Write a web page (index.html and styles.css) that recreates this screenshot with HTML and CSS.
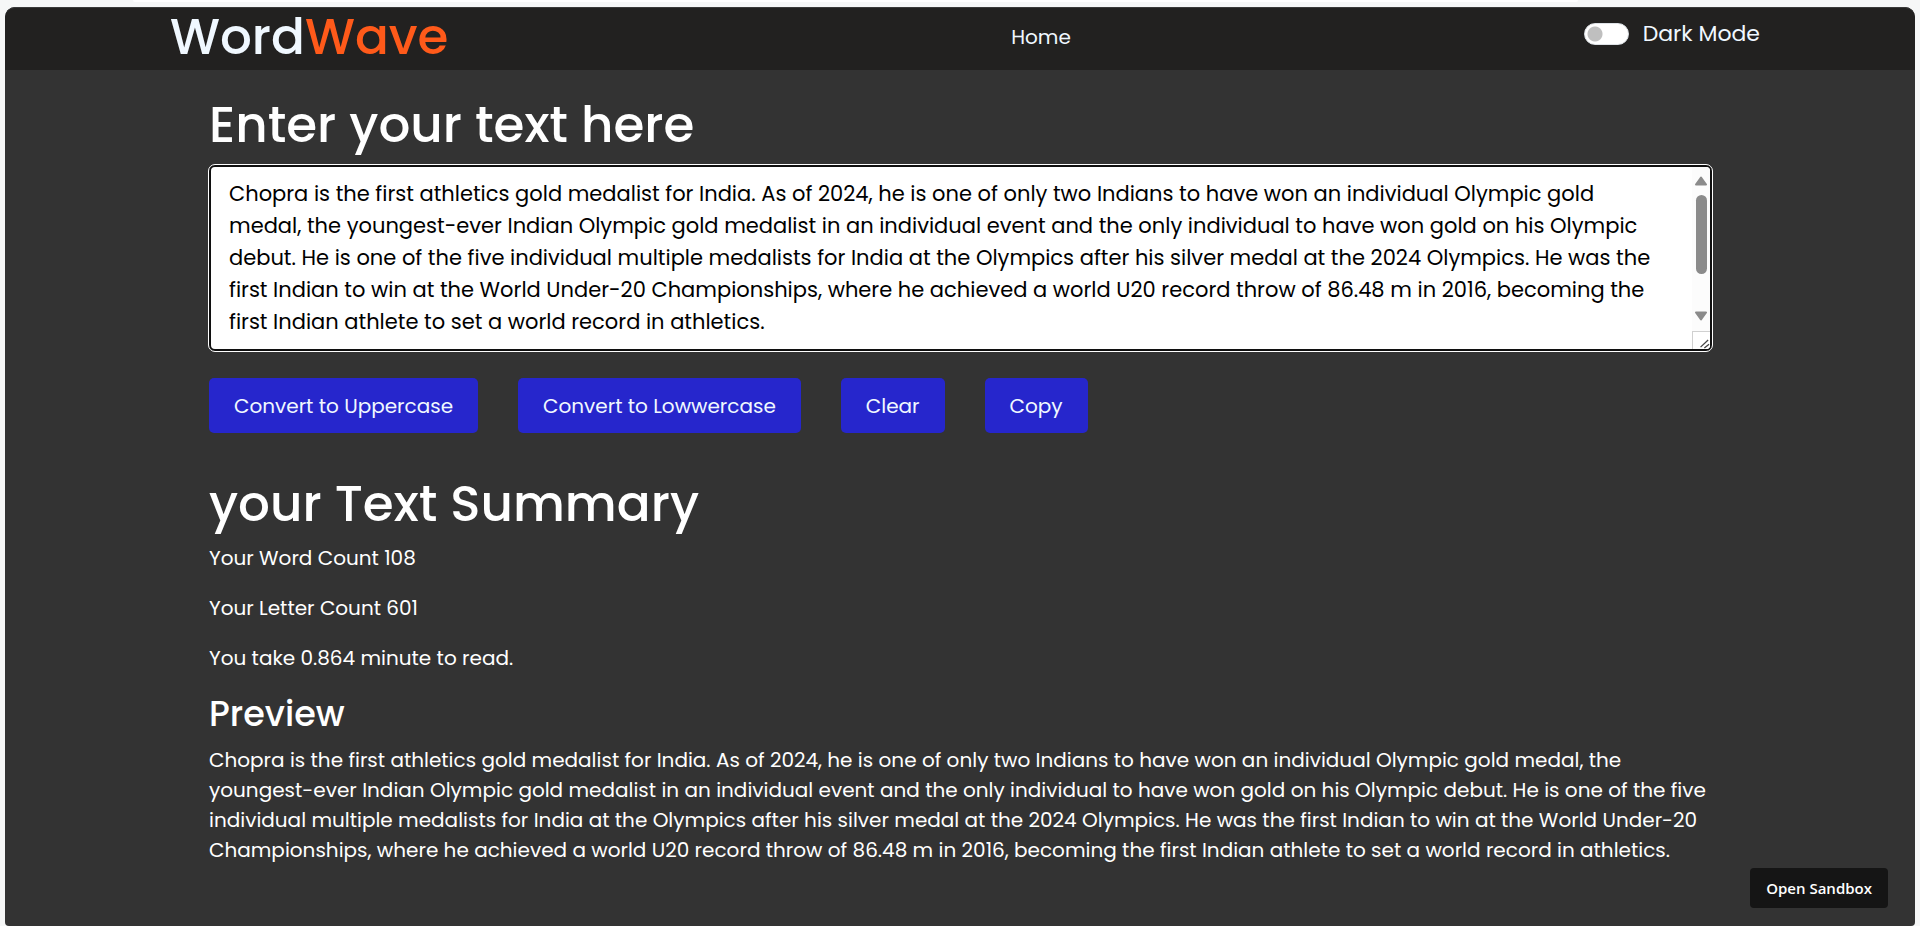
FILE: index.html
```html
<!DOCTYPE html>
<html lang="en">
<head>
<meta charset="utf-8">
<title>WordWave</title>
<link rel="stylesheet" href="styles.css">
</head>
<body>
<div class="tab-strip"></div>
<div class="panel">
  <header class="navbar">
    <a class="logo" href="#">Word<span class="logo-accent">Wave</span></a>
    <nav class="nav"><a class="nav-link" href="#">Home</a></nav>
    <label class="mode"><input class="switch" type="checkbox" role="switch"><span>Dark Mode</span></label>
  </header>
  <main class="content">
    <h1 class="title"><label for="text">Enter your text here</label></h1>
    <div class="editor-wrap">
      <textarea class="editor" id="text" spellcheck="false">Chopra is the first athletics gold medalist for India. As of 2024, he is one of only two Indians to have won an individual Olympic gold medal, the youngest-ever Indian Olympic gold medalist in an individual event and the only individual to have won gold on his Olympic debut. He is one of the five individual multiple medalists for India at the Olympics after his silver medal at the 2024 Olympics. He was the first Indian to win at the World Under-20 Championships, where he achieved a world U20 record throw of 86.48 m in 2016, becoming the first Indian athlete to set a world record in athletics.


</textarea>
      <div class="scrollbar" aria-hidden="true">
        <svg class="arrow" viewBox="0 0 12 10"><path d="M6 1.5 11 8.5H1Z"/></svg>
        <div class="track"><div class="thumb"></div></div>
        <svg class="arrow" viewBox="0 0 12 10"><path d="M6 8.5 11 1.5H1Z"/></svg>
        <svg class="grip" viewBox="0 0 18 18"><path d="M8 16 16 8.500M12 17 17 13"/></svg>
      </div>
    </div>
    <div class="actions">
      <button class="btn" type="button">Convert to Uppercase</button>
      <button class="btn" type="button">Convert to Lowwercase</button>
      <button class="btn" type="button">Clear</button>
      <button class="btn" type="button">Copy</button>
    </div>
    <h2 class="title">your Text Summary</h2>
    <div class="stats">
      <p>Your Word Count 108</p>
      <p>Your Letter Count 601</p>
      <p>You take 0.864 minute to read.</p>
    </div>
    <h3 class="subtitle">Preview</h3>
    <p class="preview">Chopra is the first athletics gold medalist for India. As of 2024, he is one of only two Indians to have won an individual Olympic gold medal, the youngest-ever Indian Olympic gold medalist in an individual event and the only individual to have won gold on his Olympic debut. He is one of the five individual multiple medalists for India at the Olympics after his silver medal at the 2024 Olympics. He was the first Indian to win at the World Under-20 Championships, where he achieved a world U20 record throw of 86.48 m in 2016, becoming the first Indian athlete to set a world record in athletics.</p>
  </main>
</div>
<a class="sandbox" href="#">Open Sandbox</a>
</body>
</html>
```
FILE: styles.css
```css
* { box-sizing: border-box; }
body {
  margin: 0;
  padding: 0 5px;
  background: #f6f7f7;
  color: #fff;
  font-family: Poppins, Inter, sans-serif;
  font-size: 20px;
  line-height: 30px;
}
h1, h2, h3, p { margin: 0; font-weight: 500; }
p { font-weight: 400; }
.tab-strip {
  height: 2px;
  margin: 0 337px 5px 128px;
  background: #fff;
  border-radius: 0 0 8px 8px;
}
.panel {
  min-height: calc(100vh - 7px);
  background: #333;
  border-radius: 10px 10px 4px 4px;
}
.navbar {
  display: grid;
  grid-template-columns: 1fr auto 1fr;
  align-items: center;
  height: 63px;
  padding: 0 155px 4px 165px;
  background: #222120;
  border-top: 1px solid #3a3a3a;
  border-radius: 10px 10px 0 0;
}
.logo {
  color: #f0f8ff;
  font-size: 50px;
  font-weight: 500;
  line-height: 58px;
  text-decoration: none;
}
.logo-accent { color: #ff5a1a; }
.nav { padding-left: 152px; }
.nav-link { color: #f0f8ff; text-decoration: none; }
.mode {
  display: flex;
  justify-content: flex-end;
  align-items: center;
  gap: 14px;
  padding-bottom: 6px;
  color: #f0f8ff;
  font-size: 22px;
}
.switch {
  appearance: none;
  width: 45px;
  height: 22px;
  margin: 0;
  border: 1px solid #dee2e6;
  border-radius: 11px;
  background: radial-gradient(circle at 10px 10px, #bfbfbf 7px, #fff 8px);
}
.content { padding: 21px 203px 40px 204px; }
.title {
  font-size: 50px;
  line-height: 68px;
}
.editor-wrap {
  position: relative;
  margin-top: 6px;
}
.editor {
  display: block;
  width: 100%;
  height: 186px;
  padding: 11px 38px 10px 18px;
  border: 2px solid #101010;
  border-radius: 6px;
  outline: 1px solid #fff;
  background: #fff;
  color: #000;
  font: 400 21px/32px Poppins, Inter, sans-serif;
  resize: none;
  scrollbar-width: none;
}
.scrollbar {
  position: absolute;
  top: 2px;
  right: 2px;
  bottom: 2px;
  display: flex;
  flex-direction: column;
  align-items: center;
  width: 18px;
  padding-top: 9px;
  border-radius: 0 4px 4px 0;
  background: #fcfcfc;
  overflow: hidden;
}
.arrow {
  flex: none;
  width: 12px;
  height: 10px;
  fill: #8b8b8b;
  stroke: #8b8b8b;
  stroke-width: 2;
  stroke-linejoin: round;
}
.track {
  flex: 1;
  width: 11px;
  padding: 9px 0 8px;
}
.thumb {
  height: 73%;
  border-radius: 6px;
  background: #8b8b8b;
}
.grip {
  flex: none;
  width: 18px;
  height: 18px;
  margin-top: 10px;
  border: 1px solid #d0d0d0;
  border-width: 1px 0 0 1px;
  background: #fff;
  fill: none;
  stroke: #444;
  stroke-width: 1.4;
}
.actions {
  display: flex;
  gap: 40px;
  margin: 27px 0 37px;
}
.btn {
  height: 55px;
  padding: 0 25px;
  border: 0;
  border-radius: 5px;
  background: #2626cc;
  color: #f0f8ff;
  font: 400 20px/30px Poppins, Inter, sans-serif;
}
.stats {
  display: grid;
  gap: 20px;
  margin-top: 5px;
}
.subtitle {
  margin: 21px 0 11px;
  font-size: 35px;
  line-height: 40px;
}
.sandbox {
  position: fixed;
  right: 32px;
  bottom: 18px;
  padding: 0 16px;
  border-radius: 4px;
  background: #151515;
  color: #fff;
  font: 600 15px/40px "Segoe UI", "Open Sans", sans-serif;
  text-decoration: none;
}
```
